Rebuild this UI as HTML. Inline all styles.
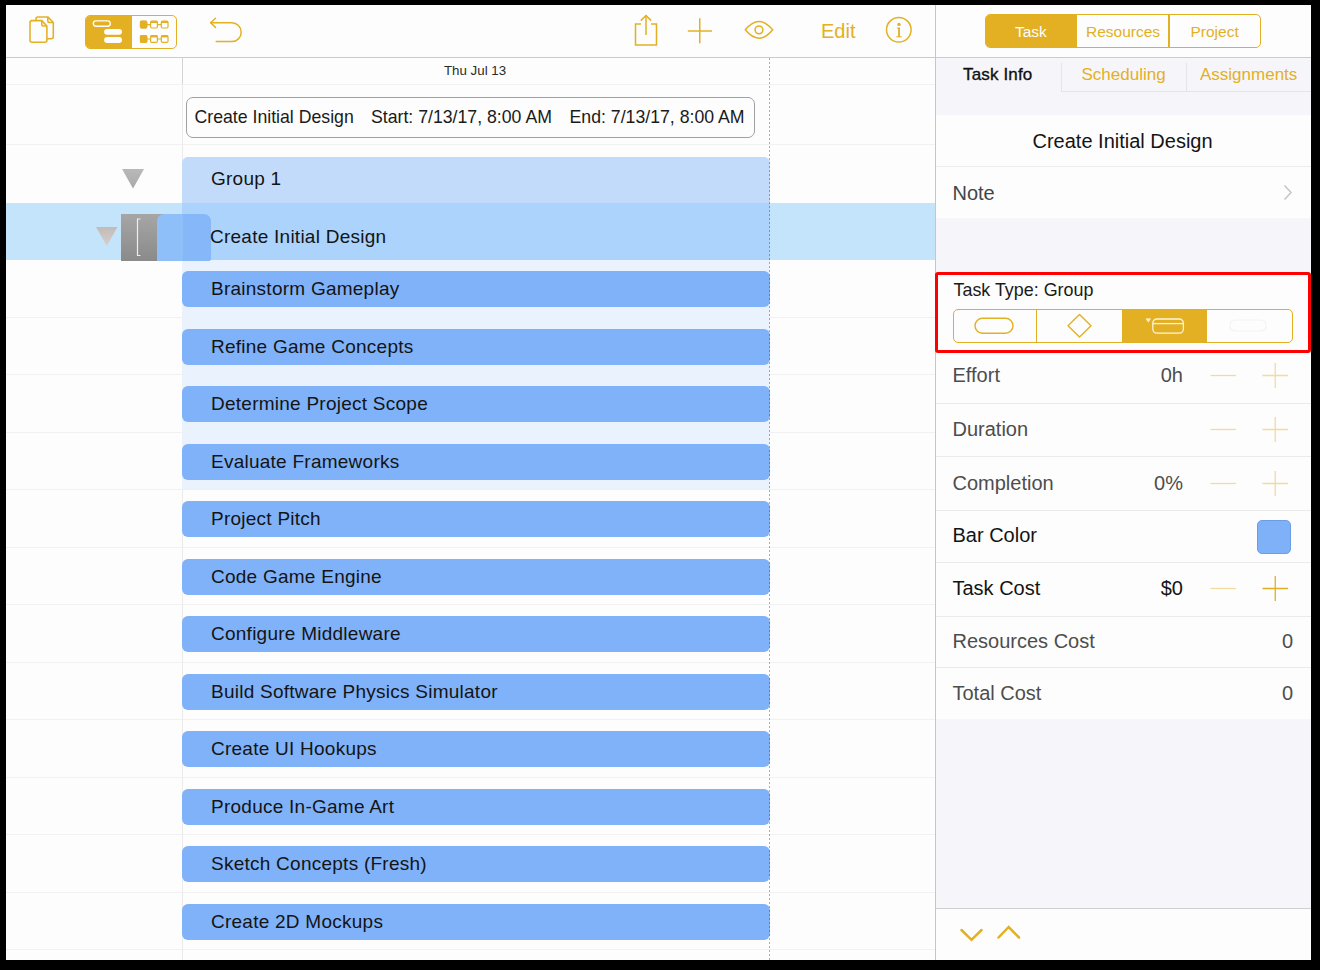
<!DOCTYPE html>
<html><head><meta charset="utf-8">
<style>
*{margin:0;padding:0;box-sizing:border-box}
html,body{width:1320px;height:970px;overflow:hidden;background:#000}
body{font-family:"Liberation Sans",sans-serif;position:relative;color:#111}
.a{position:absolute}
.t{position:absolute;white-space:nowrap;line-height:1}
.hl{position:absolute;height:1px;background:#f1f1f1}
.bar{position:absolute;left:182px;width:587.5px;height:36px;background:#80b2f9;border-radius:6px}
.lbl{position:absolute;left:211px;font-size:19px;letter-spacing:0.25px;color:#141414;white-space:nowrap;line-height:1}
.row{position:absolute;left:936px;width:375px;background:#fdfdfd}
.rl{position:absolute;left:952.5px;font-size:20px;color:#4a4a4a;white-space:nowrap;line-height:1}
svg{position:absolute;overflow:visible}
</style></head>
<body>
<div class="a" style="left:6px;top:5px;width:1305px;height:955px;background:#fdfdfd"></div>

<div class="a" style="left:6px;top:57px;width:1305px;height:1px;background:#cbcbce"></div>
<div class="hl" style="left:6px;top:84px;width:929px"></div>
<div class="hl" style="left:6px;top:144px;width:929px"></div>
<div class="hl" style="left:6px;top:259px;width:929px"></div>
<div class="hl" style="left:6px;top:317px;width:929px"></div>
<div class="hl" style="left:6px;top:374px;width:929px"></div>
<div class="hl" style="left:6px;top:432px;width:929px"></div>
<div class="hl" style="left:6px;top:489px;width:929px"></div>
<div class="hl" style="left:6px;top:547px;width:929px"></div>
<div class="hl" style="left:6px;top:604px;width:929px"></div>
<div class="hl" style="left:6px;top:662px;width:929px"></div>
<div class="hl" style="left:6px;top:719px;width:929px"></div>
<div class="hl" style="left:6px;top:777px;width:929px"></div>
<div class="hl" style="left:6px;top:834px;width:929px"></div>
<div class="hl" style="left:6px;top:892px;width:929px"></div>
<div class="hl" style="left:6px;top:949px;width:929px"></div>
<div class="hl" style="left:6px;top:1007px;width:929px"></div>
<div class="a" style="left:182px;top:58px;width:1px;height:902px;background:#ebebeb"></div>
<div class="a" style="left:182px;top:58px;width:1px;height:26px;background:#d4d4d4"></div>
<div class="t" style="left:444px;top:63.6px;font-size:13.3px;color:#2a2a2a">Thu Jul 13</div>
<div class="a" style="left:186px;top:97px;width:569px;height:41px;border:1px solid #a0a0a0;border-radius:7px;background:#fdfdfd"></div>
<div class="t" style="left:194.5px;top:109.4px;font-size:17.7px;color:#1a1a1a">Create Initial Design</div>
<div class="t" style="left:371px;top:109.4px;font-size:17.7px;color:#1a1a1a">Start: 7/13/17, 8:00 AM</div>
<div class="t" style="left:569.5px;top:109.4px;font-size:17.7px;color:#1a1a1a">End: 7/13/17, 8:00 AM</div>
<div class="a" style="left:182px;top:157px;width:587.5px;height:333px;background:#eaf2fd;border-radius:6px 6px 0 0"></div>
<div class="a" style="left:182px;top:157px;width:587.5px;height:103px;background:#c2dbfa;border-radius:6px 6px 0 0"></div>
<div class="a" style="left:6px;top:203px;width:929px;height:57px;background:#c4e4fb"></div>
<div class="a" style="left:182px;top:203px;width:587.5px;height:57px;background:#abd3fb"></div>
<div class="lbl" style="top:169px">Group 1</div>
<svg style="left:122px;top:169px" width="22" height="20"><defs><linearGradient id="tg" x1="0" y1="0" x2="0" y2="1"><stop offset="0" stop-color="#b9b9b9"/><stop offset="1" stop-color="#a9a9a9"/></linearGradient></defs><path d="M0 0 L22 0 L11 19.5 Z" fill="url(#tg)"/></svg>
<svg style="left:95.5px;top:227px" width="22" height="20"><defs><linearGradient id="tg2" x1="0" y1="0" x2="0" y2="1"><stop offset="0" stop-color="#c2bcb8"/><stop offset="1" stop-color="#d6d0cc"/></linearGradient></defs><path d="M0 0 L21.5 0 L10.75 19 Z" fill="url(#tg2)"/></svg>
<div class="a" style="left:121px;top:214px;width:55px;height:46.5px;background:linear-gradient(#a6a6a6,#8a8a8a)"></div>
<svg style="left:136px;top:218px" width="8" height="40"><path d="M4.5 1 H1.5 V37.5 H4.5" fill="none" stroke="#eeeeee" stroke-width="1.2"/></svg>
<div class="a" style="left:156.5px;top:214px;width:54px;height:46.5px;background:linear-gradient(90deg,#8fbff8 0,#8fbff8 26px,#86b7f8 26px);border-radius:7px 7px 2px 0"></div>
<div class="lbl" style="left:210px;top:226.6px">Create Initial Design</div>
<div class="bar" style="top:271.0px"></div>
<div class="lbl" style="top:279.2px">Brainstorm Gameplay</div>
<div class="bar" style="top:328.5px"></div>
<div class="lbl" style="top:336.7px">Refine Game Concepts</div>
<div class="bar" style="top:386.0px"></div>
<div class="lbl" style="top:394.2px">Determine Project Scope</div>
<div class="bar" style="top:443.5px"></div>
<div class="lbl" style="top:451.7px">Evaluate Frameworks</div>
<div class="bar" style="top:501.0px"></div>
<div class="lbl" style="top:509.2px">Project Pitch</div>
<div class="bar" style="top:558.5px"></div>
<div class="lbl" style="top:566.7px">Code Game Engine</div>
<div class="bar" style="top:616.0px"></div>
<div class="lbl" style="top:624.2px">Configure Middleware</div>
<div class="bar" style="top:673.5px"></div>
<div class="lbl" style="top:681.7px">Build Software Physics Simulator</div>
<div class="bar" style="top:731.0px"></div>
<div class="lbl" style="top:739.2px">Create UI Hookups</div>
<div class="bar" style="top:788.5px"></div>
<div class="lbl" style="top:796.7px">Produce In-Game Art</div>
<div class="bar" style="top:846.0px"></div>
<div class="lbl" style="top:854.2px">Sketch Concepts (Fresh)</div>
<div class="bar" style="top:903.5px"></div>
<div class="lbl" style="top:911.7px">Create 2D Mockups</div>
<div class="a" style="left:768.5px;top:58px;width:1px;height:902px;background:repeating-linear-gradient(180deg,rgba(40,55,80,0.4) 0,rgba(40,55,80,0.4) 2px,transparent 2px,transparent 4px)"></div>
<svg style="left:20px;top:10px" width="40" height="40"><g fill="none" stroke="#e3b024" stroke-width="1.55" stroke-linejoin="round"><path d="M10 12.6 Q10 10.6 12 10.6 H21.8 L26.9 16 V30.3 Q26.9 32.3 24.9 32.3 H12 Q10 32.3 10 30.3 Z"/><path d="M21.8 10.6 V14.5 Q21.8 16 23.3 16 H26.9"/><path d="M16 10.6 V8.9 Q16 6.9 18 6.9 H27.8 L33.3 12.5 V26.8 Q33.3 28.8 31.3 28.8 H26.9"/><path d="M27.8 6.9 V11 Q27.8 12.5 29.3 12.5 H33.3"/></g></svg>
<div class="a" style="left:84.5px;top:14.5px;width:92.5px;height:34px;border:1.5px solid #e3b024;border-radius:5px;background:#fdfdfd;overflow:hidden"><div class="a" style="left:0;top:0;width:46px;height:34px;background:#e3b024"></div></div>
<svg style="left:92px;top:19px" width="32" height="26"><rect x="1.3" y="1.9" width="17" height="5.3" rx="2.65" fill="none" stroke="#fdfdfd" stroke-width="1.4"/><rect x="12.1" y="9.9" width="17.9" height="5.8" rx="2.9" fill="#fdfdfd"/><rect x="12.1" y="17.9" width="17.9" height="6.1" rx="3" fill="#fdfdfd"/></svg>
<svg style="left:138px;top:19px" width="34" height="26"><g fill="none" stroke="#e3b024" stroke-width="1.2"><rect x="2.4" y="2.2" width="6.4" height="6.8" rx="1.2"/><rect x="12.6" y="2.2" width="6.8" height="6.8" rx="1.2"/><rect x="23.3" y="2.2" width="6.7" height="6.8" rx="1.2"/><path d="M8.8 5.6 H12.6 M19.4 5.6 H23.3"/><rect x="2.4" y="16.6" width="6.4" height="6.8" rx="1.2"/><rect x="12.6" y="16.6" width="6.8" height="6.8" rx="1.2"/><rect x="23.3" y="16.6" width="6.7" height="6.8" rx="1.2"/><path d="M8.8 20 H12.6 M19.4 20 H23.3"/></g><g fill="#e3b024"><rect x="2" y="1.8" width="7.2" height="7.6" rx="1.4"/><rect x="2" y="16.2" width="7.2" height="7.6" rx="1.4"/><rect x="12.6" y="2.2" width="6.8" height="1.8"/><rect x="23.3" y="2.2" width="6.7" height="1.8"/><rect x="12.6" y="16.6" width="6.8" height="1.8"/><rect x="23.3" y="16.6" width="6.7" height="1.8"/></g></svg>
<svg style="left:200px;top:10px" width="50" height="40"><g fill="none" stroke="#e3b024" stroke-width="1.5" stroke-linecap="round" stroke-linejoin="round"><path d="M10.6 12.8 H31.8 A9.4 9.4 0 0 1 31.8 31.6 H16.2"/><path d="M15.5 8.2 L10.6 12.8 L15.5 17.4"/></g></svg>
<svg style="left:633px;top:14px" width="26" height="33"><g fill="none" stroke="#e3b024" stroke-width="1.5"><path d="M8 10 H2.5 V31 H23.5 V10 H18"/><path d="M13 21 V1.5"/><path d="M7.8 6.6 L13 1.5 L18.2 6.6"/></g></svg>
<svg style="left:687px;top:18px" width="26" height="27"><path d="M0.8 13 H25 M12.75 0.3 V25.3" stroke="#e3b024" stroke-width="1.5" fill="none"/></svg>
<svg style="left:744px;top:18px" width="30" height="24"><g fill="none" stroke="#e3b024" stroke-width="1.5" stroke-linejoin="round"><path d="M1.3 11.85 Q15 -4.85 28.7 11.85 Q15 28.55 1.3 11.85 Z"/><circle cx="15" cy="11.85" r="3.9"/></g></svg>
<div class="t" style="left:821px;top:21px;font-size:20px;color:#e3b024">Edit</div>
<svg style="left:884px;top:16px" width="30" height="30"><circle cx="14.8" cy="13.8" r="12.3" fill="none" stroke="#e3b024" stroke-width="1.5"/><circle cx="15" cy="8.4" r="1.7" fill="#e3b024"/><path d="M12.9 11.6 H15.9 V20.2 H17.7 V21.2 H12.3 V20.2 H14.1 V12.6 H12.9 Z" fill="#e3b024"/></svg>
<div class="a" style="left:936px;top:58px;width:375px;height:902px;background:#f6f6fa"></div>
<div class="a" style="left:935px;top:5px;width:1px;height:955px;background:#c6c6c8"></div>
<div class="a" style="left:984.5px;top:14px;width:276.5px;height:33.5px;border:1.5px solid #e3b024;border-radius:5px;overflow:hidden;background:#fdfdfd"><div class="a" style="left:0;top:0;width:90px;height:33.5px;background:#e3b024"></div><div class="a" style="left:90px;top:0;width:1.5px;height:33.5px;background:#e3b024"></div><div class="a" style="left:182.5px;top:0;width:1.5px;height:33.5px;background:#e3b024"></div></div>
<div class="t" style="left:1015px;top:24.2px;font-size:15.5px;color:#fdfdfd">Task</div>
<div class="t" style="left:1086px;top:24.2px;font-size:15.5px;color:#e3b024">Resources</div>
<div class="t" style="left:1190.5px;top:24.2px;font-size:15.5px;color:#e3b024">Project</div>
<div class="a" style="left:1061px;top:63px;width:250px;height:28.5px;border-left:1px solid #e4e4ea;border-bottom:1px solid #e4e4ea"></div>
<div class="a" style="left:1186px;top:63px;width:1px;height:28px;background:#e4e4ea"></div>
<div class="t" style="left:963px;top:66px;font-size:17px;color:#111;-webkit-text-stroke:0.35px #111;letter-spacing:0.15px">Task Info</div>
<div class="t" style="left:1081.5px;top:66px;font-size:17px;color:#e3b024">Scheduling</div>
<div class="t" style="left:1200px;top:66px;font-size:17px;color:#e3b024">Assignments</div>
<div class="row" style="top:114.5px;height:51.5px"></div>
<div class="hl" style="left:936px;top:166px;width:375px;background:#ececf0"></div>
<div class="t" style="left:1032.5px;top:131.2px;font-size:20px;color:#141414">Create Initial Design</div>
<div class="row" style="top:167px;height:51px"></div>
<div class="rl" style="top:183px;color:#444">Note</div>
<svg style="left:1283px;top:184px" width="10" height="17"><path d="M1.5 1.5 L8 8.5 L1.5 15.5" fill="none" stroke="#c7c7cc" stroke-width="1.6"/></svg>
<div class="row" style="top:272px;height:77px"></div>
<div class="t" style="left:953.5px;top:281.6px;font-size:17.9px;color:#1a1a1a">Task Type: Group</div>
<div class="a" style="left:953px;top:309px;width:339.5px;height:34px;border:1.3px solid #e3b024;border-radius:5px;overflow:hidden;background:#fdfdfd"><div class="a" style="left:81.7px;top:0;width:1.3px;height:34px;background:#e3b024"></div><div class="a" style="left:168px;top:0;width:85px;height:34px;background:#e3b024"></div></div>
<svg style="left:974px;top:317px" width="42" height="18"><rect x="1" y="1.2" width="38" height="15" rx="7.5" fill="none" stroke="#e3b024" stroke-width="1.4"/></svg>
<svg style="left:1066px;top:313px" width="27" height="26"><path d="M13.5 1.5 L25 12.75 L13.5 24 L2 12.75 Z" fill="none" stroke="#e3b024" stroke-width="1.4" stroke-linejoin="round"/></svg>
<svg style="left:1144px;top:317px" width="42" height="18"><path d="M1.5 1.5 H7 L4.25 5.5 Z" fill="#fdf3dc"/><rect x="8.8" y="2" width="30.6" height="14.2" rx="4.2" fill="none" stroke="#fdf3dc" stroke-width="1.3"/><path d="M8.8 6.6 H39.4" stroke="#fdf3dc" stroke-width="1.3"/></svg>
<svg style="left:1227px;top:317px" width="44" height="18"><rect x="3" y="3" width="36" height="11" rx="5" fill="none" stroke="#f3f3f3" stroke-width="1.2"/></svg>
<div class="row" style="top:349.0px;height:53.6px"></div>
<div class="rl" style="top:365.1px;color:#4d4d4d">Effort</div>
<div class="t" style="right:137px;top:365.1px;font-size:20px;color:#4d4d4d">0h</div>
<svg style="left:1210px;top:362.3px" width="27" height="27"><path d="M0.5 13.5 H26" stroke="#f3dba0" stroke-width="1.3"/></svg>
<svg style="left:1262px;top:362.3px" width="27" height="27"><path d="M0.5 13.5 H26 M13.25 1 V26" stroke="#f3dba0" stroke-width="1.3" fill="none"/></svg>
<div class="row" style="top:402.6px;height:53.7px"></div>
<div class="rl" style="top:418.7px;color:#4d4d4d">Duration</div>
<svg style="left:1210px;top:416.0px" width="27" height="27"><path d="M0.5 13.5 H26" stroke="#f3dba0" stroke-width="1.3"/></svg>
<svg style="left:1262px;top:416.0px" width="27" height="27"><path d="M0.5 13.5 H26 M13.25 1 V26" stroke="#f3dba0" stroke-width="1.3" fill="none"/></svg>
<div class="row" style="top:456.3px;height:54.1px"></div>
<div class="rl" style="top:472.6px;color:#4d4d4d">Completion</div>
<div class="t" style="right:137px;top:472.6px;font-size:20px;color:#4d4d4d">0%</div>
<svg style="left:1210px;top:469.9px" width="27" height="27"><path d="M0.5 13.5 H26" stroke="#f3dba0" stroke-width="1.3"/></svg>
<svg style="left:1262px;top:469.9px" width="27" height="27"><path d="M0.5 13.5 H26 M13.25 1 V26" stroke="#f3dba0" stroke-width="1.3" fill="none"/></svg>
<div class="row" style="top:510.4px;height:51.4px"></div>
<div class="rl" style="top:525.3px;color:#141414">Bar Color</div>
<div class="a" style="left:1257px;top:519.5px;width:34px;height:34px;background:#7eb1f8;border:1px solid #6c9ee6;border-radius:5px"></div>
<div class="row" style="top:561.8px;height:54.1px"></div>
<div class="rl" style="top:578.1px;color:#141414">Task Cost</div>
<div class="t" style="right:137px;top:578.1px;font-size:20px;color:#141414">$0</div>
<svg style="left:1210px;top:575.3px" width="27" height="27"><path d="M0.5 13.5 H26" stroke="#f3dba0" stroke-width="1.3"/></svg>
<svg style="left:1262px;top:575.3px" width="27" height="27"><path d="M0.5 13.5 H26 M13.25 1 V26" stroke="#e3b024" stroke-width="1.3" fill="none"/></svg>
<div class="row" style="top:615.9px;height:51.3px"></div>
<div class="rl" style="top:630.8px;color:#4d4d4d">Resources Cost</div>
<div class="t" style="right:27px;top:630.8px;font-size:20px;color:#4d4d4d">0</div>
<div class="row" style="top:667.2px;height:52.3px"></div>
<div class="rl" style="top:682.6px;color:#4d4d4d">Total Cost</div>
<div class="t" style="right:27px;top:682.6px;font-size:20px;color:#4d4d4d">0</div>
<div class="hl" style="left:936px;top:402.6px;width:375px;background:#ebebee"></div>
<div class="hl" style="left:936px;top:456.3px;width:375px;background:#ebebee"></div>
<div class="hl" style="left:936px;top:510.4px;width:375px;background:#ebebee"></div>
<div class="hl" style="left:936px;top:561.8px;width:375px;background:#ebebee"></div>
<div class="hl" style="left:936px;top:615.9px;width:375px;background:#ebebee"></div>
<div class="hl" style="left:936px;top:667.2px;width:375px;background:#ebebee"></div>
<div class="a" style="left:936px;top:907.5px;width:375px;height:1.5px;background:#cfcfd3"></div>
<div class="a" style="left:936px;top:909px;width:375px;height:51px;background:#fdfdfd"></div>
<svg style="left:950px;top:915px" width="80" height="35"><path d="M11.5 15 L21.5 24.8 L31.5 15 M48.5 22.5 L58.7 12 L69 22.5" fill="none" stroke="#e3b024" stroke-width="2.5" stroke-linecap="round" stroke-linejoin="miter"/></svg>
<div class="a" style="left:935px;top:272px;width:376px;height:81px;border:3.7px solid #fe0000;border-radius:3px"></div>
</body></html>
